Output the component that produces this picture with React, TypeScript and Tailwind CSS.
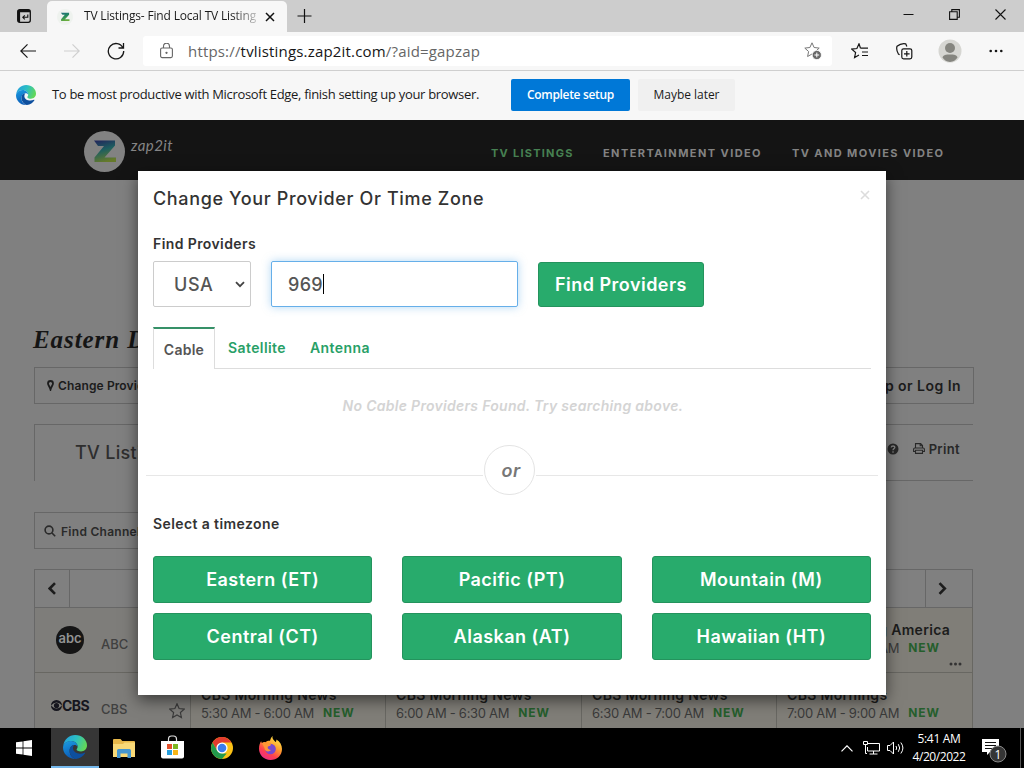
import type { ReactNode } from 'react';

const edgeFont = "font-['Open_Sans',sans-serif]";
const siteFont = "font-['Inter',sans-serif]";

function EdgeLogo({ size, id }: { size: number; id: string }) {
  return (
    <svg width={size} height={size} viewBox="0 0 24 24">
      <defs>
        <linearGradient id={id + 'a'} x1="0" y1="0.2" x2="1" y2="0.5">
          <stop offset="0" stopColor="#259fdc" />
          <stop offset="0.5" stopColor="#2bbfc4" />
          <stop offset="1" stopColor="#63d857" />
        </linearGradient>
        <linearGradient id={id + 'b'} x1="0" y1="0" x2="0.3" y2="1">
          <stop offset="0" stopColor="#1b9de2" />
          <stop offset="1" stopColor="#0b5cb8" />
        </linearGradient>
      </defs>
      <path d="M.3 10.5C1.300 4.300 6 0 12.200 0 19 0 24 4.900 24 10.300c0 3.900-2.700 6.200-6 6.200-2.900 0-4.400-1-4.400-1.900 0-.7 1-1.200 1-3 0-2.700-2.500-5.600-6.600-5.600C4 6 1.400 8.300.3 10.500z" fill={`url(#${id}a)`} />
      <path d="M.3 10.500C1.600 7.700 4.500 6 8 6c4.100 0 6.600 2.900 6.600 5.600-.7-1.200-1.800-1.700-3-1.700-3 0-5 2.700-5 6 0 4.300 2.900 7.200 6.500 8.100C6 24.500 0 19 0 12.500z" fill={`url(#${id}b)`} />
      <path d="M11.200 9.900c-3 .1-4.700 3-4.600 6 .2 4.400 3.400 7.300 6.500 8.100 4-.4 7.200-2.700 9-5.700.3-.6-.1-.9-.6-.6-4.700 2.300-11.500.4-11.500-4.600 0-1.300.5-2.400 1.200-3.200z" fill="#0d4f9e" />
    </svg>
  );
}

function ZLogo({ size, id, dim }: { size: number; id: string; dim?: boolean }) {
  return (
    <svg width={size} height={size} viewBox="0 0 41 41">
      <defs>
        <linearGradient id={id} x1="0.2" y1="0" x2="0.5" y2="1">
          <stop offset="0" stopColor={dim ? '#22295c' : '#1f6d78'} />
          <stop offset="0.45" stopColor={dim ? '#1d5e60' : '#238a5c'} />
          <stop offset="1" stopColor={dim ? '#667a2a' : '#6cae3c'} />
        </linearGradient>
      </defs>
      <circle cx="20.500" cy="20.500" r="20.500" fill={dim ? '#828282' : '#eef2ee'} />
      <path d="M10 9.500h21v5L20.500 26.500H32v4.500H10.500v-4.500L20 15h-6z" fill={`url(#${id})`} />
    </svg>
  );
}

function TabBar() {
  return (
    <div className="flex h-8 bg-[#cdcdcd]">
      <div className="flex w-[47px] items-center justify-center">
        <svg width="14" height="14" viewBox="0 0 14 14" fill="none" stroke="#111">
          <rect x="0.700" y="0.700" width="12.600" height="12.600" rx="2" strokeWidth="1.300" />
          <path d="M1 2.200h12M2 1v12" strokeWidth="2.200" />
          <path d="M10.800 5.500v2.800H6M7.800 6.300l-2 2 2 2" strokeWidth="1.100" />
        </svg>
      </div>
      <div className="mt-px flex h-[31px] w-[240px] items-center rounded-t-[5px] bg-[#f7f7f7] pl-[10px]">
        <ZLogo size={16} id="favicon" />
        <div className="mb-px ml-[11px] w-[173px] overflow-hidden whitespace-nowrap bg-linear-to-r from-[#1a1a1a] from-85% to-[#c8c8c8] bg-clip-text text-[12px] leading-5 tracking-[-0.175px] text-transparent">
          TV Listings- Find Local TV Listing
        </div>
        <svg className="ml-[8px]" width="10" height="10" viewBox="0 0 10 10" stroke="#111" strokeWidth="1.500">
          <path d="M1 1l8 8M9 1L1 9" />
        </svg>
      </div>
      <svg className="mt-[9px] ml-[10px]" width="15" height="15" viewBox="0 0 15 15" stroke="#111" strokeWidth="1.200">
        <path d="M7.500 0v14M.5 7h14" />
      </svg>
      <div className="mt-[9px] mr-[18px] ml-auto flex gap-[35px]">
        <svg width="11" height="11" viewBox="0 0 11 11" stroke="#111"><path d="M.5 5.500h10" /></svg>
        <svg width="11" height="11" viewBox="0 0 11 11" fill="none" stroke="#111" strokeWidth="1.100">
          <path d="M.6 2.800h7.600v7.600H.6zM2.800 2.600V.6h7.600v7.600H8.400" />
        </svg>
        <svg width="11" height="11" viewBox="0 0 11 11" stroke="#111" strokeWidth="1.100"><path d="M.5.500l10 10M10.500.500l-10 10" /></svg>
      </div>
    </div>
  );
}

const starOutline = 'M8 .8l2.100 4.700 5.100.6-3.800 3.400 1 5L8 12l-4.400 2.500 1-5L.8 6.100l5.100-.6z';

function Toolbar() {
  return (
    <div className="flex h-[39px] items-center border-b border-[#cfcfcf] bg-[#f7f7f7] pl-[20px]">
      <svg width="16" height="16" viewBox="0 0 16 16" fill="none" stroke="#161616" strokeWidth="1.200">
        <path d="M16 8H1M7.500 1.300L.8 8l6.700 6.700" />
      </svg>
      <svg className="ml-[28px]" width="16" height="16" viewBox="0 0 16 16" fill="none" stroke="#cfcfcf" strokeWidth="1.200">
        <path d="M0 8h15M8.500 1.300L15.200 8l-6.700 6.700" />
      </svg>
      <svg className="ml-[27px]" width="18" height="18" viewBox="0 0 18 18" fill="none" stroke="#161616" strokeWidth="1.300">
        <path d="M16 6a7.700 7.700 0 1 0 .7 3M16.500 1v5h-5" />
      </svg>
      <div className="ml-[18px] flex h-[30px] w-[689px] items-center rounded-[3px] bg-white pl-[17px]">
        <svg width="13" height="16" viewBox="0 0 13 16" fill="none" stroke="#666" strokeWidth="1.100">
          <rect x="0.600" y="5" width="11.800" height="9.600" rx="1.500" />
          <path d="M3.500 5V3.200a3 3 0 0 1 6 0V5" />
          <circle cx="6.500" cy="9.800" r="0.600" fill="#666" />
        </svg>
        <div className="ml-[15px] text-[15px] leading-5 tracking-[0.18px] whitespace-nowrap text-[#666]">
          https://<span className="text-[#161616]">tvlistings.zap2it.com</span>/?aid=gapzap
        </div>
        <svg className="mr-[10px] ml-auto" width="18" height="18" viewBox="0 0 18 18" fill="none">
          <path d={starOutline} stroke="#777" />
          <circle cx="12.800" cy="13" r="4.600" fill="#666" stroke="#fff" strokeWidth="0.800" />
          <path d="M12.800 10.600v4.800M10.400 13h4.800" stroke="#fff" />
        </svg>
      </div>
      <svg className="ml-[19px]" width="18" height="16" viewBox="0 0 18 16" fill="none" stroke="#161616" strokeWidth="1.200">
        <path d="M9.500 5.200H17M11 9h6M11 12.500h6M9.500 5.200L8 .8 5.900 5.500.8 6.100l3.800 3.400-1 5L8 12" />
      </svg>
      <svg className="ml-[27px]" width="17" height="17" viewBox="0 0 17 17" fill="none" stroke="#161616" strokeWidth="1.200">
        <rect x="5.800" y="5.800" width="10" height="10" rx="1.800" />
        <path d="M10.800 8v5.600M8 10.800h5.600M3.600 11.800 2.400 11C1 8.500.3 5.500 1 3.300 3.500 1.200 7 .300 9.700.800l1.200 2.800" />
      </svg>
      <svg className="ml-[25px]" width="24" height="24" viewBox="0 0 24 24">
        <circle cx="12" cy="12" r="11.500" fill="#d6d6d2" />
        <circle cx="12" cy="9" r="5" fill="#85857f" />
        <path d="M4.500 18.500C5 16 8 15.500 12 15.500s7 .5 7.500 3A10 10 0 0 1 12 23a10 10 0 0 1-7.500-4.500z" fill="#85857f" />
      </svg>
      <svg className="ml-[27px]" width="14" height="4" viewBox="0 0 14 4" fill="#161616">
        <circle cx="1.700" cy="2" r="1.300" /><circle cx="7" cy="2" r="1.300" /><circle cx="12.300" cy="2" r="1.300" />
      </svg>
    </div>
  );
}

function SetupBar() {
  return (
    <div className="flex h-[49px] items-center bg-[#f7f7f7] pb-px pl-4 text-[#1a1a1a]">
      <EdgeLogo size={20} id="bar" />
      <div className="ml-4 w-[459px] text-[13px] tracking-[-0.315px] whitespace-nowrap">
        To be most productive with Microsoft Edge, finish setting up your browser.
      </div>
      <div className="flex h-8 w-[119px] items-center justify-center rounded-[2px] bg-[#0078d7] text-[12px] font-semibold tracking-[-0.32px] text-white">
        Complete setup
      </div>
      <div className="ml-[8px] flex h-8 w-[97px] items-center justify-center rounded-[2px] bg-[#f0f0f0] text-[12px] tracking-[-0.03px]">
        Maybe later
      </div>
    </div>
  );
}

function SiteHeader() {
  return (
    <div className="flex h-[60px] bg-[#141414] text-[11px] font-bold text-[#838383]">
      <div className="mt-[11px] ml-[84px] h-[41px] w-[41px]"><ZLogo size={41} id="brand" dim /></div>
      <div className="mt-[15px] ml-[6px] w-[360px] font-['Lato',sans-serif] text-[15px] leading-5 font-normal tracking-[0.45px] text-[#858585] italic">zap2it</div>
      <div className="mt-[25px] flex leading-4 whitespace-nowrap">
        <div className="w-[112px] tracking-[1.25px] text-[#478152]">TV LISTINGS</div>
        <div className="w-[189px] tracking-[1.42px]">ENTERTAINMENT VIDEO</div>
        <div className="tracking-[1.4px]">TV AND MOVIES VIDEO</div>
      </div>
    </div>
  );
}

const airingCell = 'flex h-full flex-col border-r border-[#686762] bg-[#807e78]';

function Airing({ title, time, dots }: { title: string; time: string; dots?: boolean }) {
  return (
    <div className={airingCell + ' pt-[12px] pl-[10px] whitespace-nowrap'}>
      <div className="text-[14px] leading-5 font-semibold tracking-[0.32px] text-[#1c1c1c]">{title}</div>
      <div className="flex h-4 items-center text-[13px] leading-4 tracking-[-0.3px] text-[#3a3a3a]">
        {time}
        <span className="ml-[9px] text-[12px] font-bold tracking-[0.9px] text-[#255e2c]">NEW</span>
      </div>
      {dots && (
        <svg className="mt-[6px] mr-[10px] ml-auto" width="13" height="4" viewBox="0 0 13 4" fill="#333">
          <circle cx="2" cy="2" r="1.500" /><circle cx="6.500" cy="2" r="1.500" /><circle cx="11" cy="2" r="1.500" />
        </svg>
      )}
    </div>
  );
}

function Channel({ logo, name, star }: { logo: ReactNode; name: string; star?: boolean }) {
  return (
    <div className="flex h-full items-start border-r border-[#686762] bg-[#7e7d7a] text-[13px] font-medium text-[#404040]">
      <div className="flex h-[64px] w-[66px] items-center pl-[16px]">{logo}</div>
      <div className="mt-[28px] w-[68px] leading-4">{name}</div>
      {star && <svg className="mt-[30px]" width="16" height="16" viewBox="0 0 16 16" fill="none" stroke="#3b3b3b" strokeWidth="1.200"><path d={starOutline} /></svg>}
    </div>
  );
}

const gridCols = 'grid grid-cols-[156px_195px_196px_195px_196px]';

function Listings() {
  return (
    <div className="ml-[34px] w-[939px] border-l border-[#676767]">
      <div className="flex h-[39px] border-y border-r border-[#676767]">
        <div className="flex w-[35px] items-center justify-center border-r border-[#676767]">
          <svg width="9" height="13" viewBox="0 0 9 13" fill="none" stroke="#1c1c1c" strokeWidth="2.600"><path d="M7 1.200L1.700 6.500 7 11.800" /></svg>
        </div>
        <div className="flex-1" />
        <div className="flex w-[47px] items-center border-l border-[#676767] pl-[12px]">
          <svg width="9" height="13" viewBox="0 0 9 13" fill="none" stroke="#1c1c1c" strokeWidth="2.600"><path d="M1.500 1.200l5.300 5.300-5.300 5.300" /></svg>
        </div>
      </div>
      <div className={gridCols + ' h-[65px] border-b border-[#686762]'}>
        <Channel
          name="ABC"
          logo={
            <div className="ml-[5px] flex h-7 w-7 items-center justify-center rounded-full bg-[#151515] pb-[2px] text-[13px] font-semibold tracking-[-0.1px] text-[#929292]">abc</div>
          }
        />
        <div className={airingCell} />
        <div className={airingCell} />
        <div className={airingCell} />
        <Airing title="Good Morning America" time="7:00 AM - 9:00 AM" dots />
      </div>
      <div className={gridCols + ' h-[55px]'}>
        <Channel
          name="CBS"
          star
          logo={
            <div className="flex items-center text-[14px] font-bold tracking-[-0.6px] text-[#16161e]">
              <svg width="11" height="11" viewBox="0 0 11 11">
                <circle cx="5.500" cy="5.500" r="5.500" fill="#16161e" />
                <path d="M0 5.500Q5.500-.5 11 5.500 5.500 11.500 0 5.500z" fill="#7e7d7a" />
                <circle cx="5.500" cy="5.500" r="2.600" fill="#16161e" />
              </svg>
              CBS
            </div>
          }
        />
        <Airing title="CBS Morning News" time="5:30 AM - 6:00 AM" />
        <Airing title="CBS Morning News" time="6:00 AM - 6:30 AM" />
        <Airing title="CBS Morning News" time="6:30 AM - 7:00 AM" />
        <Airing title="CBS Mornings" time="7:00 AM - 9:00 AM" />
      </div>
    </div>
  );
}

function PageContent() {
  return (
    <div className="flex flex-col">
      <SiteHeader />
      <div className="mt-[144px] ml-[33px] h-[33px] font-['Liberation_Serif',serif] text-[25px] leading-[32px] font-bold tracking-[0.92px] whitespace-nowrap text-[#151515] italic">
        Eastern Daylight
      </div>
      <div className="mt-[10px] mr-[50px] ml-[34px] flex h-[37px] items-center justify-between border border-[#676767] pr-[12px] pl-[12px] text-[#1c1c1c]">
        <div className="flex items-center text-[12px] font-semibold tracking-[0.12px]">
          <svg className="mr-[4px]" width="7" height="11" viewBox="0 0 7 11" fill="none" stroke="#1c1c1c" strokeWidth="1.800">
            <path d="M1 3.500a2.500 2.500 0 0 1 5 0C6 5.200 4.300 6.500 3.500 9.500 2.700 6.500 1 5.200 1 3.500z" />
          </svg>
          Change Provider
        </div>
        <div className="text-[14px] font-semibold tracking-[0.46px]">Sign Up or Log In</div>
      </div>
      <div className="mt-[20px] mr-[51px] ml-[34px] flex h-[57px] border-t border-l border-[#676767] pl-[40px] text-[18px] leading-[56px] font-medium tracking-[0.3px] text-[#2e2e2e]">
        TV Listings
        <div className="ml-auto flex w-[140px] items-center justify-end border-b border-[#676767] pr-[13px] pb-[8px] text-[13px] leading-5 font-semibold tracking-[0.35px] text-[#282828]">
          <svg width="12" height="12" viewBox="0 0 12 12">
            <circle cx="6" cy="6" r="5.500" fill="#282828" />
            <path d="M4.200 4.500C4.300 2.500 7.900 2.500 7.800 4.500 7.800 5.700 6 5.600 6 7.200M6 8.300v1.400" fill="none" stroke="#858585" strokeWidth="1.300" />
          </svg>
          <svg className="mr-[4px] ml-[14px]" width="12" height="11" viewBox="0 0 12 11" fill="none" stroke="#282828" strokeWidth="1.100">
            <path d="M2.500 5V.6h5.200L9.500 2.400V5M7.200.8v2h2M2.500 8.500H.6V6.200Q.6 5 1.800 5h8.400q1.200 0 1.200 1.200v2.300H9.500M2.500 7.300h7v3.100h-7z" />
          </svg>
          Print
        </div>
      </div>
      <div className="mt-[31px] ml-[34px] flex h-[37px] w-[160px] items-center border border-[#676767] pl-[9px] text-[12px] font-semibold tracking-[0.28px] text-[#2a2a2a]">
        <svg className="mr-[5px]" width="12" height="12" viewBox="0 0 12 12" fill="none" stroke="#2a2a2a" strokeWidth="1.600">
          <circle cx="5" cy="5" r="3.900" /><path d="M8 8l3.200 3.200" />
        </svg>
        <span className="mt-[2px]">Find Channel</span>
      </div>
      <div className="mt-[20px]"><Listings /></div>
    </div>
  );
}

function ZoneButton({ children }: { children: ReactNode }) {
  return (
    <button className="h-[47px] rounded-[3px] border border-[#24935d] bg-[#28ab6c] text-[18px] font-semibold tracking-[0.48px] text-white">
      {children}
    </button>
  );
}

function ProviderDialog() {
  return (
    <div className="absolute top-[51px] left-[138px] flex h-[524px] w-[748px] flex-col bg-white px-[15px] text-[#333] shadow-[0_5px_15px_rgba(0,0,0,0.55)]">
      <div className="flex h-[56px] items-center justify-between pr-[1px]">
        <div className="mb-px text-[18px] font-medium tracking-[0.64px]">Change Your Provider Or Time Zone</div>
        <svg className="mb-[8px]" width="10" height="10" viewBox="0 0 10 10" stroke="#dcdcdc" strokeWidth="1.600"><path d="M1 1l8 8M9 1L1 9" /></svg>
      </div>
      <div className="mt-[7px] text-[14px] leading-5 font-semibold tracking-[0.4px]">Find Providers</div>
      <div className="mt-[7px] flex h-[46px] items-center text-[18px] font-medium text-[#555]">
        <div className="flex h-[46px] w-[98px] items-center rounded-[2px] border border-[#ccc] pl-[20px] tracking-[0.6px]">
          USA
          <svg className="ml-[22px]" width="10" height="7" viewBox="0 0 10 7" fill="none" stroke="#444" strokeWidth="1.800"><path d="M1 1.200l4 4 4-4" /></svg>
        </div>
        <div className="ml-5 flex h-[46px] w-[247px] items-center rounded-[2px] border border-[#66afe9] pl-[16px] tracking-[0.33px] shadow-[0_0_8px_rgba(102,175,233,0.5)]">
          969
          <div className="h-5 w-px bg-black" />
        </div>
        <button className="ml-5 h-[45px] w-[166px] rounded-[3px] border border-[#24935d] bg-[#28ab6c] text-[18px] font-semibold tracking-[0.48px] text-white">
          Find Providers
        </button>
      </div>
      <div className="mt-[20px] flex h-[42px] text-[14px] font-semibold text-[#28a067]">
        <div className="flex w-[62px] items-center justify-center border-x border-t-2 border-[#ddd] border-t-[#369168] tracking-[0.25px] text-[#555]">Cable</div>
        <div className="flex flex-1 items-center border-b border-[#ddd] pl-[13px]">
          <div className="w-[82px] tracking-[0.41px]">Satellite</div>
          <div className="tracking-[0.43px]">Antenna</div>
        </div>
      </div>
      <div className="mt-[27px] pl-[2px] text-center text-[14px] leading-5 font-semibold tracking-[0.29px] text-[#d4d4d4] italic">
        No Cable Providers Found. Try searching above.
      </div>
      <div className="-mx-[7px] mt-[29px] flex h-[50px] items-center">
        <div className="mt-[11px] h-px w-[337px] bg-[#e7e7e7]" />
        <div className="mx-px flex h-[50px] w-[51px] items-center justify-center rounded-full border border-[#e4e4e4] pt-[1px] pl-[3px] text-[18px] font-semibold tracking-[0.4px] text-[#777] italic">or</div>
        <div className="mt-[11px] h-px flex-1 bg-[#e7e7e7]" />
      </div>
      <div className="mt-[19px] text-[14px] leading-5 font-semibold tracking-[0.4px]">Select a timezone</div>
      <div className="mt-[22px] grid grid-cols-3 gap-x-[30px] gap-y-[10px]">
        <ZoneButton>Eastern (ET)</ZoneButton>
        <ZoneButton>Pacific (PT)</ZoneButton>
        <ZoneButton>Mountain (M)</ZoneButton>
        <ZoneButton>Central (CT)</ZoneButton>
        <ZoneButton>Alaskan (AT)</ZoneButton>
        <ZoneButton>Hawaiian (HT)</ZoneButton>
      </div>
    </div>
  );
}

function Taskbar() {
  return (
    <div className="flex h-10 items-center bg-black text-white">
      <div className="flex w-[51px] items-center pl-4">
        <svg width="16" height="16" viewBox="0 0 16 16" fill="#fff">
          <path d="M0 2.300L6.600 1.400v6.200H0zM7.400 1.300L16 0v7.600H7.400zM0 8.400h6.600v6.200L0 13.700zM7.400 8.400H16V16l-8.600-1.300z" />
        </svg>
      </div>
      <div className="flex h-10 w-12 items-center justify-center border-b-2 border-[#76b9ed] bg-[#363636]">
        <EdgeLogo size={24} id="task" />
      </div>
      <svg className="ml-[14px]" width="22" height="19" viewBox="0 0 22 19">
        <path d="M0 1q0-1 1-1h6.500l1.800 2H21q1 0 1 1v15H0z" fill="#e8b84a" />
        <path d="M0 5h10l1.500-1.500H22V18H0z" fill="#f9d977" />
        <path d="M4 19v-7.500q0-1.500 1.500-1.500h11q1.500 0 1.500 1.500V19h-3.500v-4.500h-7V19z" fill="#4596cf" />
      </svg>
      <svg className="mb-[2px] ml-[26px]" width="23" height="24" viewBox="0 0 23 24">
        <path d="M7.500 6V4q0-3 3-3h2q3 0 3 3v2" fill="none" stroke="#ddd" strokeWidth="1.200" />
        <path d="M0 6h23v15.500q0 2-2 2H2q-2 0-2-2z" fill="#fff" />
        <path d="M6 9h5v5H6z" fill="#e4512b" /><path d="M12 9h5v5h-5z" fill="#7db723" />
        <path d="M6 15h5v5H6z" fill="#269fde" /><path d="M12 15h5v5h-5z" fill="#f7b518" />
      </svg>
      <svg className="ml-[27px]" width="22" height="22" viewBox="0 0 22 22">
        <circle cx="11" cy="11" r="11" fill="#fbc116" />
        <path d="M1.500 5.500A11 11 0 0 1 20.500 5.500H11L6.300 13.800z" fill="#e33b2e" />
        <path d="M1.500 5.500L6.300 13.800 11 16.500h4.700L11 22A11 11 0 0 1 1.500 5.500z" fill="#229a4c" />
        <circle cx="11" cy="11" r="5.600" fill="#fff" /><circle cx="11" cy="11" r="4.300" fill="#3b7ded" />
      </svg>
      <svg className="mb-px ml-[26px]" width="23" height="24" viewBox="0 0 23 24">
        <defs>
          <linearGradient id="fox" x1="0.800" y1="0" x2="0.200" y2="1">
            <stop offset="0" stopColor="#fff04a" /><stop offset="0.400" stopColor="#ff9b2e" />
            <stop offset="0.700" stopColor="#ff3f50" /><stop offset="1" stopColor="#e32a91" />
          </linearGradient>
        </defs>
        <path d="M14 0c-1.500 2 .3 3.500 2.500 6 .8-.5 1-1.500.8-2.600C21 5.500 23 9 23 13c0 6.500-5 11-11.500 11S0 19 0 12.800C0 9 1 7 2.200 5c0 1 .3 1.500.8 2 1-.9 2.300-1 3.500-.8C8 4.800 9.500 4.600 11 4.700 11.500 2.500 12.500.800 14 0z" fill="url(#fox)" />
        <circle cx="11.500" cy="13" r="5.300" fill="#7849cf" />
        <path d="M3 7c2-1 4-.5 5 .8l4 .4c0 1.800-2.500 1.700-3.200 2.600-.5 1 .5 3.400 3.200 3.200-2 2.500-6.500 1.500-6.500-2z" fill="#ff9736" />
      </svg>
      <svg className="ml-auto" width="12" height="7" viewBox="0 0 12 7" fill="none" stroke="#fff" strokeWidth="1.200"><path d="M.5 6.300L6 .8l5.500 5.500" /></svg>
      <svg className="ml-[10px]" width="17" height="14" viewBox="0 0 17 14" fill="none" stroke="#fff">
        <path d="M5 2.500h11.500v7.500H4.500V6M10.500 10v3M6.500 13h8M.5.500h4v3h-4zM2.500 3.500v9H4" />
      </svg>
      <svg className="ml-[7px]" width="18" height="14" viewBox="0 0 18 14" fill="none" stroke="#fff">
        <path d="M.5 4.500H3L6.500 1v12L3 9.500H.5zM9 5q1.300 2 0 4M11.300 3.200q2.800 3.800 0 7.600M13.800 1.500q4.200 5.500 0 11" />
      </svg>
      <div className="ml-[6px] flex w-[56px] flex-col items-center text-[12px] leading-[18px] whitespace-nowrap">
        <div className="tracking-[-0.32px]">5:41 AM</div>
        <div className="tracking-[-0.43px]">4/20/2022</div>
      </div>
      <svg className="mt-[4px] mr-[13px] ml-[15px]" width="25" height="25" viewBox="0 0 25 25">
        <path d="M0 1h17v13H8l-3 3v-3H0z" fill="#fff" />
        <path d="M3 4.500h11M3 7.500h11M3 10.500h7" stroke="#111" />
        <circle cx="16" cy="16" r="8" fill="#353535" stroke="#888" />
        <text x="16" y="20.500" textAnchor="middle" fontSize="12" fontFamily="Open Sans, sans-serif" fill="#fff">1</text>
      </svg>
      <div className="mr-[3px] h-10 w-px bg-[#555]" />
    </div>
  );
}

export default function App() {
  return (
    <div className={'flex h-[768px] w-[1024px] flex-col overflow-hidden ' + edgeFont}>
      <TabBar />
      <Toolbar />
      <SetupBar />
      <div className={'relative h-[608px] overflow-hidden bg-[#808080] ' + siteFont}>
        <PageContent />
        <ProviderDialog />
      </div>
      <Taskbar />
    </div>
  );
}
